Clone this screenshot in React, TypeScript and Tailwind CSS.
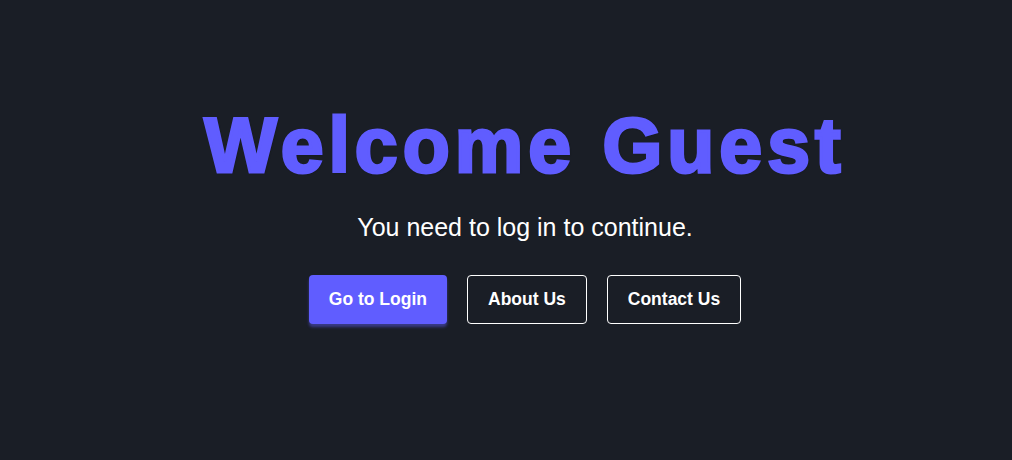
export default function App() {
  return (
    <div className="min-h-screen w-full bg-[#1a1e26] flex flex-col items-center pt-[100px] pl-[38px] font-['Liberation_Sans',Arial,sans-serif]">
      <h1 className="text-[77px] leading-[90px] font-bold tracking-[5px] text-[#605dff] [text-shadow:1px_1px_2px_rgba(0,0,0,0.5)] [-webkit-text-stroke:3px_#605dff]">
        Welcome Guest
      </h1>
      <p className="mt-[22px] text-[25px] leading-[30px] text-white">
        You need to log in to continue.
      </p>
      <div className="mt-[33px] flex gap-5">
        <button className="h-[49px] px-[20px] rounded text-[17.5px] font-bold text-white bg-[#605dff] shadow-[0_3px_3px_rgba(96,93,255,0.45)]">
          Go to Login
        </button>
        <button className="h-[49px] px-[20px] rounded border border-white text-[17.5px] font-bold text-white bg-transparent">
          About Us
        </button>
        <button className="h-[49px] px-[20px] rounded border border-white text-[17.5px] font-bold text-white bg-transparent">
          Contact Us
        </button>
      </div>
    </div>
  );
}
